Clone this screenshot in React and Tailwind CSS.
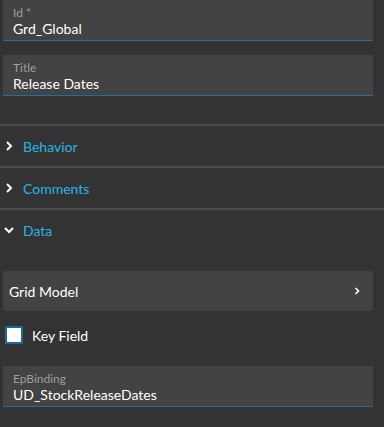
import React from "react";

const Field = ({ label, value, className = "" }) => (
  <div className={`mx-[3px] w-[370px] h-[41px] bg-[#434343] border-b border-[#1b6fae] px-[10px] pt-[6px] flex flex-col ${className}`}>
    <span className="text-[12px] leading-[14px] text-[#9e9e9e]">{label}</span>
    <span className="text-[14px] leading-[18px] text-white">{value}</span>
  </div>
);

const Chevron = ({ open }) => (
  <svg width="10" height="10" viewBox="0 0 10 10" className="shrink-0">
    {open ? (
      <path d="M1 3 L5 7 L9 3" fill="none" stroke="#fff" strokeWidth="2" />
    ) : (
      <path d="M3 1 L7 5 L3 9" fill="none" stroke="#fff" strokeWidth="2" />
    )}
  </svg>
);

const Section = ({ title, open }) => (
  <div className="border-t-2 border-[#4a4a4a] h-[42px] flex items-center gap-[9px] pl-[4px]">
    <Chevron open={open} />
    <span className="text-[14px] text-[#2bb3ea]">{title}</span>
  </div>
);

const App = () => {
  return (
    <div className="w-[384px] h-[427px] bg-[#333333] overflow-hidden" style={{ fontFamily: "Lato, 'Noto Sans', sans-serif" }}>
      <Field label="Id *" value="Grd_Global" />
      <Field label="Title" value="Release Dates" className="mt-[14px]" />

      <div className="mt-[28px]">
        <Section title="Behavior" />
        <Section title="Comments" />
        <Section title="Data" open />
      </div>

      <div className="mt-[21px] mx-[3px] w-[370px] h-[40px] bg-[#434343] rounded-[3px] flex items-center justify-between px-[6px]">
        <span className="text-[14px] text-white">Grid Model</span>
        <svg width="8" height="8" viewBox="0 0 8 8" className="mr-[6px]">
          <path d="M2.5 1 L5.5 4 L2.5 7" fill="none" stroke="#fff" strokeWidth="1.6" />
        </svg>
      </div>

      <div className="mt-[15px] flex items-center pl-[5px] h-[18px] gap-[9px]">
        <div className="w-[18px] h-[18px] bg-white border-2 border-[#1a6aa0]" />
        <span className="text-[14px] text-white">Key Field</span>
      </div>

      <Field label="EpBinding" value="UD_StockReleaseDates" className="mt-[22px]" />
    </div>
  );
};

export default App;
